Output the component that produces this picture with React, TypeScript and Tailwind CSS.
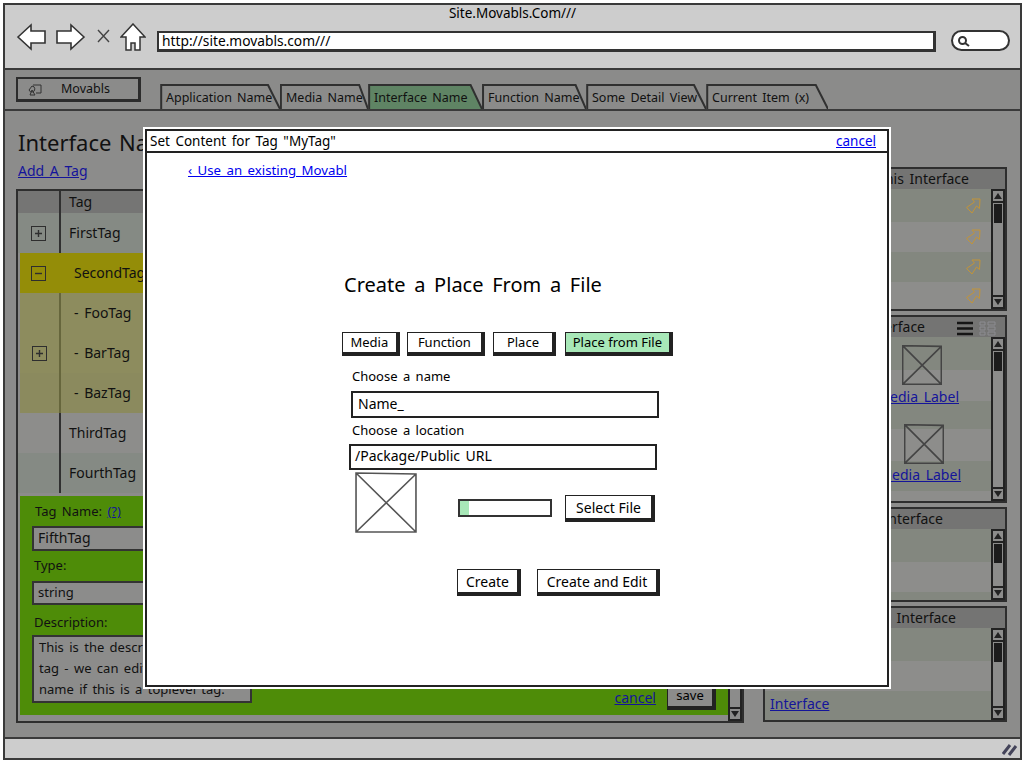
import type { ReactNode } from "react";

const tabs = [
  { label: "Application Name", w: "w-[120px]", active: false },
  { label: "Media Name", w: "w-[88px]", active: false },
  { label: "Interface Name", w: "w-[114px]", active: true },
  { label: "Function Name", w: "w-[104px]", active: false },
  { label: "Some Detail View", w: "w-[120px]", active: false },
  { label: "Current Item (x)", w: "w-[122px]", active: false },
];

function Tab({ label, w, active }: { label: string; w: string; active: boolean }) {
  return (
    <div className={`relative h-[26px] ${w} pl-[6px] pt-[5px] text-[12.5px] leading-[20px] whitespace-nowrap`}>
      <svg className="absolute inset-0 h-full w-full" preserveAspectRatio="none" viewBox="0 0 100 26">
        <path
          d="M1 26 L1 2 L90 2 L100 26"
          fill={active ? "#5f8464" : "none"}
          stroke="#303030"
          strokeWidth="2"
          vectorEffect="non-scaling-stroke"
        />
      </svg>
      <span className="relative">{label}</span>
    </div>
  );
}

function SketchButton({ children, className }: { children: ReactNode; className: string }) {
  return (
    <button
      type="button"
      className={`flex items-center justify-center border border-[#222] border-r-4 border-b-4 text-[13px] text-black ${className}`}
    >
      {children}
    </button>
  );
}

function ImagePlaceholder({ className, stroke }: { className: string; stroke: string }) {
  return (
    <svg className={className} viewBox="0 0 60 60" preserveAspectRatio="none">
      <path d="M1 1 L59 2 L59 59 L1 59 Z M1 1 L59 59 M59 2 L1 59" fill="none" stroke={stroke} strokeWidth="1.6" vectorEffect="non-scaling-stroke" />
    </svg>
  );
}

function ScrollBar({ className }: { className: string }) {
  return (
    <div className={`flex w-[14px] flex-col items-center border-2 border-[#222] bg-[#8c8c8b] ${className}`}>
      <div className="flex h-[12px] w-full shrink-0 items-center justify-center border-b-2 border-[#222]">
        <div className="h-0 w-0 border-x-[4px] border-b-[6px] border-x-transparent border-b-[#222]" />
      </div>
      <div className="mt-[1px] h-[19px] w-[8px] shrink-0 bg-[#1c1c1c]" />
      <div className="flex-1" />
      <div className="flex h-[12px] w-full shrink-0 items-center justify-center border-t-2 border-[#222]">
        <div className="h-0 w-0 border-x-[4px] border-t-[6px] border-x-transparent border-t-[#222]" />
      </div>
    </div>
  );
}

function Arrow() {
  return (
    <svg className="mr-[10px] h-[16px] w-[16px]" viewBox="0 0 16 16">
      <path d="M15 1 H7 L9.5 4 L1.5 9.5 L7 15 L11.5 8 L14.5 10.5 Z" fill="none" stroke="#c29438" strokeWidth="1" />
    </svg>
  );
}

function Plus({ minus }: { minus?: boolean }) {
  return (
    <div className="flex h-[15px] w-[15px] items-center justify-center border border-[#2e2e2e]">
      <svg className="h-[11px] w-[11px]" viewBox="0 0 11 11">
        <path d={minus ? "M2 5.5 H9" : "M2 5.5 H9 M5.5 2 V9"} stroke="#2e2e2e" strokeWidth="1.4" />
      </svg>
    </div>
  );
}

function TagRow({ name, bg, plus }: { name: string; bg: string; plus?: boolean }) {
  return (
    <div className={`flex h-[40px] items-center ${bg}`}>
      <div className="box-content flex h-full w-[41px] shrink-0 items-center justify-center border-r-2 border-[#303030]">
        {plus && <Plus />}
      </div>
      <span className="pb-[1px] pl-[8px] text-[14px] whitespace-nowrap">{name}</span>
    </div>
  );
}

function PanelHead({ text, pad, children }: { text: string; pad: string; children?: ReactNode }) {
  return (
    <div className="relative h-[20px] shrink-0 bg-[#747473] text-right text-[14px] leading-[20px]">
      <span className={`block ${pad} whitespace-nowrap`}>{text}</span>
      {children}
    </div>
  );
}

function Stripes({ heights }: { heights: string[] }) {
  return (
    <>
      {heights.map((h, i) => (
        <div key={i} className={`${h} ${i % 2 === 0 ? "bg-[#83877f]" : "bg-[#8d8d8b]"}`} />
      ))}
    </>
  );
}

export default function App() {
  return (
    <div className="h-[764px] w-[1024px] overflow-hidden bg-white pl-[3px] pt-[3px] font-['Noto_Sans',sans-serif] text-[#111] [word-spacing:2px]">
      <div className="relative flex h-[757px] w-[1019px] flex-col border-2 border-[#3a3a3a]">
        {/* browser chrome */}
        <div className="flex h-[65px] shrink-0 flex-col border-b-2 border-[#3a3a3a] bg-[#cdcdcd]">
          <div className="text-center text-[13.5px] leading-[16px] text-black">Site.Movabls.Com///</div>
          <div className="flex items-start pl-[11px] pt-[2px]">
            <svg className="h-[28px] w-[31px]" viewBox="0 0 31 28">
              <path d="M2 14 L15 2 V8 H29 V20 H15 V26 Z" fill="white" stroke="#333" strokeWidth="1.6" />
            </svg>
            <svg className="ml-[8px] h-[28px] w-[31px]" viewBox="0 0 31 28">
              <path d="M29 14 L16 2 V8 H2 V20 H16 V26 Z" fill="white" stroke="#333" strokeWidth="1.6" />
            </svg>
            <svg className="ml-[11px] mt-[6px] h-[14px] w-[13px]" viewBox="0 0 13 14">
              <path d="M1 1 L12 13 M12 1 L1 13" stroke="#444" strokeWidth="1.4" />
            </svg>
            <svg className="ml-[10px] h-[28px] w-[26px]" viewBox="0 0 26 28">
              <path d="M13 1 L25 14 H20 V27 H15 V20 H11 V27 H6 V14 H1 Z" fill="white" stroke="#333" strokeWidth="1.5" />
            </svg>
            <div className="ml-[11px] mt-[8px] flex h-[21px] w-[779px] items-center border-2 border-[#333] border-r-[3px] border-b-[3px] bg-white pl-[3px] text-[13.75px] leading-none text-black [word-spacing:0]">
              http://site.movabls.com///
            </div>
            <div className="ml-[15px] mt-[7px] flex h-[21px] w-[59px] items-center rounded-full border-2 border-[#333] bg-white pl-[4px]">
              <svg className="h-[12px] w-[13px]" viewBox="0 0 13 12">
                <circle cx="5.5" cy="5.5" r="3.5" fill="none" stroke="#333" strokeWidth="2" />
                <path d="M8 8 L12 11" stroke="#333" strokeWidth="2" />
              </svg>
            </div>
          </div>
        </div>

        {/* movabls nav with tabs */}
        <div className="flex h-[39px] shrink-0 items-start bg-[#8b8b8a] pl-[11px]">
          <div className="mt-[7px] flex h-[25px] w-[125px] items-center border-2 border-[#2c2c2c] border-r-[3px] border-b-[3px] pl-[8px]">
            <svg className="h-[14px] w-[16px]" viewBox="0 0 16 14">
              <path d="M6 4 A3 3 0 1 1 3 8 Z M7 3 H15 V11 H10 M4 13 L6 8 L9 13 Z" fill="none" stroke="#333" strokeWidth="1" />
            </svg>
            <span className="ml-[19px] text-[12.5px]">Movabls</span>
          </div>
          <div className="ml-[19px] mt-[13px] flex">
            {tabs.map((t) => (
              <Tab key={t.label} {...t} />
            ))}
          </div>
        </div>

        {/* page body */}
        <div className="flex min-h-0 flex-1 flex-col border-t-2 border-[#3a3a3a] bg-[#8c8c8b] pl-[11px]">
          <h1 className="ml-[2px] mt-[17px] text-[22px] font-normal leading-[28px]">Interface Name</h1>
          <a className="ml-[2px] mt-[5px] block text-[14px] leading-[20px] text-[#14149a] underline">Add A Tag</a>
          <div className="mt-[8px] flex h-[534px] gap-[19px]">
            {/* tag table */}
            <div className="relative flex w-[728px] shrink-0 border-2 border-[#2e2e2e]">
              <div className="min-w-0 flex-1">
                <div className="flex h-[22px] bg-[#757574] text-[14px] leading-[22px]">
                  <div className="box-content w-[41px] border-r-2 border-[#303030]" />
                  <span className="pl-[8px]">Tag</span>
                </div>
                <TagRow name="FirstTag" bg="bg-[#858a84]" plus />
                <div className="ml-[2px]">
                  <div className="flex h-[40px] items-center bg-[#948d08]">
                    <div className="flex w-[39px] shrink-0 justify-center pr-[2px]"><Plus minus /></div>
                    <span className="pb-[1px] pl-[15px] text-[14px]">SecondTag</span>
                  </div>
                  <div className="flex h-[40px] items-center bg-[#8d8c5e]">
                    <div className="box-content h-full w-[39px] shrink-0 border-r-2 border-[#66663c]" />
                    <span className="pb-[1px] pl-[13px] text-[14px]">- FooTag</span>
                  </div>
                  <div className="flex h-[40px] items-center bg-[#8d8c5e]">
                    <div className="box-content flex h-full w-[39px] shrink-0 items-center justify-center border-r-2 border-[#66663c]"><Plus /></div>
                    <span className="pb-[1px] pl-[13px] text-[14px]">- BarTag</span>
                  </div>
                  <div className="flex h-[40px] items-center bg-[#8b8a5e]">
                    <div className="box-content h-full w-[39px] shrink-0 border-r-2 border-[#66663c]" />
                    <span className="pb-[1px] pl-[13px] text-[14px]">- BazTag</span>
                  </div>
                </div>
                <TagRow name="ThirdTag" bg="bg-[#8d8d8b]" />
                <TagRow name="FourthTag" bg="bg-[#858a84]" />
                {/* expanded row editor */}
                <div className="relative ml-[2px] mt-[3px] h-[219px] bg-[#4e8c08]">
                  <div className="w-[220px] pl-[15px] pt-[5px]">
                    <div className="text-[13px] leading-[20px]">
                      Tag Name: <a className="text-[#14149a] underline">(?)</a>
                    </div>
                    <div className="-ml-[3px] mt-[5px] flex h-[25px] w-[220px] items-center border-2 border-[#333] bg-[#8c8c8b] pb-[3px] pl-[4px] text-[14px]">FifthTag</div>
                    <div className="-ml-[1px] mt-[4px] text-[13px] leading-[20px]">Type:</div>
                    <div className="-ml-[3px] mt-[6px] flex h-[24px] w-[220px] items-center border-2 border-[#333] bg-[#8c8c8b] pl-[4px] text-[13px]">string</div>
                    <div className="-ml-[1px] mt-[7px] text-[13px] leading-[20px]">Description:</div>
                    <div className="-ml-[3px] mt-[3px] h-[68px] w-[220px] border-2 border-[#333] bg-[#8c8c8b] px-[5px] text-[13px] leading-[21px] whitespace-nowrap">
                      This is the description of this
                      <br />
                      tag - we can edit the tag
                      <br />
                      name if this is a toplevel tag.
                    </div>
                  </div>
                  <div className="absolute bottom-[5px] right-[12px] flex items-center gap-[11px]">
                    <a className="text-[14px] text-[#14149a] underline">cancel</a>
                    <SketchButton className="h-[25px] w-[49px] bg-[#8c8c8b]">save</SketchButton>
                  </div>
                </div>
              </div>
              <ScrollBar className="h-full" />
            </div>

            {/* right side panels */}
            <div className="-mt-[22px] flex w-[244px] flex-col gap-[4px]">
              <div className="flex h-[144px] shrink-0 flex-col border-2 border-[#2e2e2e]">
                <PanelHead text="Functions in this Interface" pad="pr-[36px]" />
                <div className="flex min-h-0 flex-1">
                  <div className="min-w-0 flex-1">
                    {["h-[33px]", "h-[30px]", "h-[30px]", "h-[27px]"].map((h, i) => (
                      <div key={h + i} className={`flex items-center justify-end ${h} ${i % 2 === 0 ? "bg-[#83877f]" : "bg-[#8d8d8b]"}`}>
                        <Arrow />
                      </div>
                    ))}
                  </div>
                  <ScrollBar className="h-full" />
                </div>
              </div>

              <div className="flex h-[188px] shrink-0 flex-col border-2 border-[#2e2e2e]">
                <PanelHead text="Media in this Interface" pad="pr-[80px]">
                  <svg className="absolute right-[32px] top-[4px] h-[15px] w-[16px]" viewBox="0 0 16 15">
                    <path d="M0 2 H16 M0 7.5 H16 M0 13 H16" stroke="#151515" strokeWidth="2.4" />
                  </svg>
                  <svg className="absolute right-[9px] top-[4px] h-[15px] w-[17px]" viewBox="0 0 17 15">
                    <path d="M1 1 H6 V4 H1 Z M9 1 H16 V4 H9 Z M1 6 H6 V9 H1 Z M9 6 H16 V9 H9 Z M1 11 H6 V14 H1 Z M9 11 H16 V14 H9 Z" fill="none" stroke="#8c8c92" strokeWidth="1" />
                  </svg>
                </PanelHead>
                <div className="relative flex min-h-0 flex-1">
                  <div className="min-w-0 flex-1">
                    <Stripes heights={["h-[33px]", "h-[31px]", "h-[28px]", "h-[32px]", "h-[30px]", "h-[10px]"]} />
                  </div>
                  <ImagePlaceholder className="absolute left-[137px] top-[8px] h-[40px] w-[40px]" stroke="#444" />
                  <a className="absolute right-[46px] top-[50px] text-[14px] leading-[20px] whitespace-nowrap text-[#14149a] underline">Media Label</a>
                  <ImagePlaceholder className="absolute left-[139px] top-[87px] h-[40px] w-[40px]" stroke="#444" />
                  <a className="absolute right-[44px] top-[128px] text-[14px] leading-[20px] whitespace-nowrap text-[#14149a] underline">Media Label</a>
                  <ScrollBar className="h-full" />
                </div>
              </div>

              <div className="flex h-[95px] shrink-0 flex-col border-2 border-[#2e2e2e]">
                <PanelHead text="Places in this Interface" pad="pr-[62px]" />
                <div className="flex min-h-0 flex-1">
                  <div className="min-w-0 flex-1">
                    <Stripes heights={["h-[33px]", "h-[30px]", "h-[8px]"]} />
                  </div>
                  <ScrollBar className="h-full" />
                </div>
              </div>

              <div className="flex h-[116px] shrink-0 flex-col border-2 border-[#2e2e2e]">
                <PanelHead text="Pages using this Interface" pad="pr-[49px]" />
                <div className="relative flex min-h-0 flex-1">
                  <div className="min-w-0 flex-1">
                    <Stripes heights={["h-[33px]", "h-[30px]", "h-[29px]"]} />
                  </div>
                  <a className="absolute left-[5px] top-[66px] text-[14px] leading-[20px] text-[#14149a] underline">Interface</a>
                  <ScrollBar className="h-full" />
                </div>
              </div>
            </div>
          </div>
        </div>

        {/* status bar */}
        <div className="flex h-[21px] shrink-0 items-center justify-end border-t-2 border-[#3a3a3a] bg-[#cdcdcd] pr-[2px]">
          <svg className="h-[14px] w-[16px]" viewBox="0 0 16 14">
            <path d="M1 12 L8 3 M7 13 L14 4" stroke="#44445a" strokeWidth="3" />
          </svg>
        </div>

        {/* modal over the page */}
        <div className="absolute left-[140px] top-[124px] flex h-[558px] w-[744px] flex-col border-2 border-[#222] bg-white text-black outline-2 outline-white">
          <div className="flex h-[22px] shrink-0 items-center justify-between border-b-2 border-[#222] pl-[3px] pr-[11px] text-[13.5px]">
            <span>Set Content for Tag "MyTag"</span>
            <a className="text-[13.5px] text-[#0000ee] underline">cancel</a>
          </div>
          <div className="pl-[41px] pt-[8px]">
            <a className="block text-[13.25px] leading-[18px] text-[#0000ee] underline">‹ Use an existing Movabl</a>
          </div>
          <div className="ml-[196px] mt-[92px] w-[330px]">
            <h2 className="ml-[1px] text-[20px] font-normal leading-[28px] [word-spacing:3.5px]">Create a Place From a File</h2>
            <div className="-ml-[1px] mt-[33px] flex gap-[7px]">
              <SketchButton className="h-[24px] w-[58px]">Media</SketchButton>
              <SketchButton className="h-[24px] w-[79px]">Function</SketchButton>
              <SketchButton className="ml-[1px] h-[24px] w-[63px]">Place</SketchButton>
              <SketchButton className="ml-[2px] h-[24px] w-[109px] bg-[#a8e8b8]">Place from File</SketchButton>
            </div>
            <div className="ml-[9px] mt-[11px] text-[13px] leading-[18px]">Choose a name</div>
            <div className="ml-[8px] mt-[6px] flex h-[27px] w-[308px] items-center border-2 border-[#222] pb-[3px] pl-[5px] text-[14px]">Name_</div>
            <div className="ml-[9px] mt-[3px] text-[13px] leading-[18px]">Choose a location</div>
            <div className="ml-[6px] mt-[5px] flex h-[26px] w-[308px] items-center border-2 border-[#222] pb-[3px] pl-[4px] text-[14px]">/Package/Public URL</div>
            <div className="mt-[2px] flex items-start">
              <ImagePlaceholder className="ml-[12px] h-[61px] w-[62px]" stroke="#555" />
              <div className="ml-[41px] mt-[27px] h-[18px] w-[94px] border-2 border-[#333] bg-white">
                <div className="h-full w-[9px] bg-[#a8e8b8]" />
              </div>
              <SketchButton className="ml-[13px] mt-[23px] h-[27px] w-[90px] text-[14px]">Select File</SketchButton>
            </div>
            <div className="mt-[36px] flex">
              <SketchButton className="ml-[114px] h-[27px] w-[64px] text-[14px]">Create</SketchButton>
              <SketchButton className="ml-[16px] h-[27px] w-[123px] text-[14px]">Create and Edit</SketchButton>
            </div>
          </div>
        </div>
      </div>
    </div>
  );
}
